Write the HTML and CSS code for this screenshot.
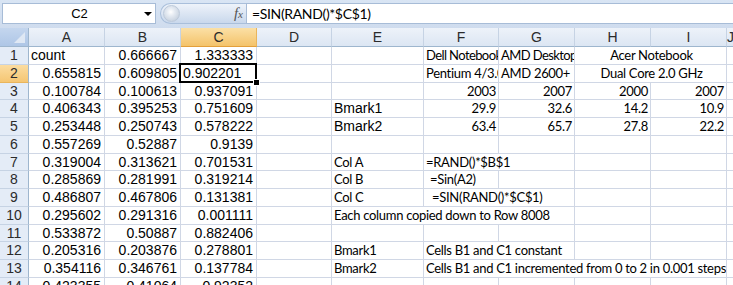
FILE: index.html
```html
<!DOCTYPE html>
<html>
<head>
    <title>Benchmark sheet</title>
    <link rel="stylesheet" href="styles.css">
</head>
<body>
    <div class="topbar">
        <div class="namebox">
            <span class="name">C2</span>
            <span class="arrow"></span>
        </div>
        <div class="fxbtn">
            <span class="knob"></span>
            <span class="fx">f<i>x</i></span>
        </div>
        <div class="formula">=SIN(RAND()*$C$1)</div>
    </div>

    <div class="sheet">
        <!-- column headers -->
        <div class="corner"><span class="tri"></span></div>
        <div class="colhead">A</div>
        <div class="colhead">B</div>
        <div class="colhead active">C</div>
        <div class="colhead">D</div>
        <div class="colhead">E</div>
        <div class="colhead">F</div>
        <div class="colhead">G</div>
        <div class="colhead">H</div>
        <div class="colhead">I</div>
        <div class="colhead">J</div>

        <!-- row 1 -->
        <div class="rowhead">1</div>
        <div class="cell">count</div>
        <div class="cell num">0.666667</div>
        <div class="cell num">1.333333</div>
        <div class="cell"></div>
        <div class="cell"></div>
        <div class="cell txt tight">Dell Notebook</div>
        <div class="cell txt tight">AMD Desktop</div>
        <div class="cell txt mid span2">Acer Notebook</div>
        <div class="cell"></div>

        <!-- row 2 -->
        <div class="rowhead active">2</div>
        <div class="cell num">0.655815</div>
        <div class="cell num">0.609805</div>
        <div class="cell sel">0.902201<span class="handle"></span></div>
        <div class="cell"></div>
        <div class="cell"></div>
        <div class="cell txt">Pentium 4/3.0 GHz</div>
        <div class="cell txt">AMD 2600+</div>
        <div class="cell txt mid span2">Dual Core 2.0 GHz</div>
        <div class="cell"></div>

        <!-- row 3 -->
        <div class="rowhead">3</div>
        <div class="cell num">0.100784</div>
        <div class="cell num">0.100613</div>
        <div class="cell num">0.937091</div>
        <div class="cell"></div>
        <div class="cell"></div>
        <div class="cell txt num">2003</div>
        <div class="cell txt num">2007</div>
        <div class="cell txt num">2000</div>
        <div class="cell txt num">2007</div>
        <div class="cell"></div>

        <!-- row 4 -->
        <div class="rowhead">4</div>
        <div class="cell num">0.406343</div>
        <div class="cell num">0.395253</div>
        <div class="cell num">0.751609</div>
        <div class="cell"></div>
        <div class="cell">Bmark1</div>
        <div class="cell txt num">29.9</div>
        <div class="cell txt num">32.6</div>
        <div class="cell txt num">14.2</div>
        <div class="cell txt num">10.9</div>
        <div class="cell"></div>

        <!-- row 5 -->
        <div class="rowhead">5</div>
        <div class="cell num">0.253448</div>
        <div class="cell num">0.250743</div>
        <div class="cell num">0.578222</div>
        <div class="cell"></div>
        <div class="cell">Bmark2</div>
        <div class="cell txt num">63.4</div>
        <div class="cell txt num">65.7</div>
        <div class="cell txt num">27.8</div>
        <div class="cell txt num">22.2</div>
        <div class="cell"></div>

        <!-- row 6 -->
        <div class="rowhead">6</div>
        <div class="cell num">0.557269</div>
        <div class="cell num">0.52887</div>
        <div class="cell num">0.9139</div>
        <div class="cell"></div>
        <div class="cell"></div>
        <div class="cell"></div>
        <div class="cell"></div>
        <div class="cell"></div>
        <div class="cell"></div>
        <div class="cell"></div>

        <!-- row 7 -->
        <div class="rowhead">7</div>
        <div class="cell num">0.319004</div>
        <div class="cell num">0.313621</div>
        <div class="cell num">0.701531</div>
        <div class="cell"></div>
        <div class="cell txt">Col A</div>
        <div class="cell txt span2">=RAND()*$B$1</div>
        <div class="cell"></div>
        <div class="cell"></div>
        <div class="cell"></div>

        <!-- row 8 -->
        <div class="rowhead">8</div>
        <div class="cell num">0.285869</div>
        <div class="cell num">0.281991</div>
        <div class="cell num">0.319214</div>
        <div class="cell"></div>
        <div class="cell txt">Col B</div>
        <div class="cell txt pad1">=Sin(A2)</div>
        <div class="cell"></div>
        <div class="cell"></div>
        <div class="cell"></div>
        <div class="cell"></div>

        <!-- row 9 -->
        <div class="rowhead">9</div>
        <div class="cell num">0.486807</div>
        <div class="cell num">0.467806</div>
        <div class="cell num">0.131381</div>
        <div class="cell"></div>
        <div class="cell txt">Col C</div>
        <div class="cell txt pad2 span2">=SIN(RAND()*$C$1)</div>
        <div class="cell"></div>
        <div class="cell"></div>
        <div class="cell"></div>

        <!-- row 10 -->
        <div class="rowhead">10</div>
        <div class="cell num">0.295602</div>
        <div class="cell num">0.291316</div>
        <div class="cell num">0.001111</div>
        <div class="cell"></div>
        <div class="cell txt span3">Each column copied down to Row 8008</div>
        <div class="cell"></div>
        <div class="cell"></div>
        <div class="cell"></div>

        <!-- row 11 -->
        <div class="rowhead">11</div>
        <div class="cell num">0.533872</div>
        <div class="cell num">0.50887</div>
        <div class="cell num">0.882406</div>
        <div class="cell"></div>
        <div class="cell"></div>
        <div class="cell"></div>
        <div class="cell"></div>
        <div class="cell"></div>
        <div class="cell"></div>
        <div class="cell"></div>

        <!-- row 12 -->
        <div class="rowhead">12</div>
        <div class="cell num">0.205316</div>
        <div class="cell num">0.203876</div>
        <div class="cell num">0.278801</div>
        <div class="cell"></div>
        <div class="cell txt">Bmark1</div>
        <div class="cell txt span2">Cells B1 and C1 constant</div>
        <div class="cell"></div>
        <div class="cell"></div>
        <div class="cell"></div>

        <!-- row 13 -->
        <div class="rowhead">13</div>
        <div class="cell num">0.354116</div>
        <div class="cell num">0.346761</div>
        <div class="cell num">0.137784</div>
        <div class="cell"></div>
        <div class="cell txt">Bmark2</div>
        <div class="cell txt span4">Cells B1 and C1 incremented from 0 to 2 in 0.001 steps</div>
        <div class="cell"></div>

        <!-- row 14 -->
        <div class="rowhead">14</div>
        <div class="cell num">0.423355</div>
        <div class="cell num">0.41064</div>
        <div class="cell num">0.92352</div>
        <div class="cell"></div>
        <div class="cell"></div>
        <div class="cell"></div>
        <div class="cell"></div>
        <div class="cell"></div>
        <div class="cell"></div>
        <div class="cell"></div>
    </div>
</body>
</html>
```

FILE: styles.css
```css
html, body {
    margin: 0;
    padding: 0;
    height: 100%;
    overflow: hidden;
}
body {
    background-color: #ffffff;
    font-family: "Liberation Sans", Arial, sans-serif;
    font-size: 14px;
    color: #000;
}

/* formula bar */
.topbar {
    display: flex;
    height: 28px;
    box-sizing: border-box;
    padding: 3px 0 4px 2px;
    background: linear-gradient(#d9e5f4, #cfdcee);
}
.namebox {
    display: flex;
    align-items: center;
    width: 154px;
    box-sizing: border-box;
    background: #fff;
    border: 1px solid #a7bcd7;
}
.name {
    flex: 1;
    text-align: center;
    font-size: 13px;
    padding-left: 12px;
}
.arrow {
    width: 0;
    height: 0;
    margin-right: 3px;
    border-left: 4px solid transparent;
    border-right: 4px solid transparent;
    border-top: 4px solid #000;
}
.fxbtn {
    display: flex;
    align-items: center;
    justify-content: space-between;
    width: 86px;
    margin-left: 4px;
    padding: 0 3px 0 2px;
    box-sizing: border-box;
    border: 1px solid #a9bfdb;
    border-right: none;
    border-radius: 11px 0 0 11px;
    background: linear-gradient(#eef3fa, #c9d8ec);
}
.knob {
    width: 15px;
    height: 15px;
    border-radius: 50%;
    background: radial-gradient(circle at 45% 40%, #ffffff 0, #e3e9f1 35%, #b9c6d6 100%);
    border: 1px solid #bcc9da;
}
.fx {
    font-family: "Liberation Serif", serif;
    font-style: italic;
    font-size: 15px;
    color: #555;
}
.fx i {
    font-size: 11px;
}
.formula {
    flex: 1;
    background: #fff;
    border: 1px solid #a7bcd7;
    border-right: none;
    padding-left: 5px;
    font-family: Lato, "Liberation Sans", sans-serif;
    font-size: 14px;
    letter-spacing: -0.35px;
    line-height: 19px;
}

/* grid */
.sheet {
    display: grid;
    grid-template-columns: 29px 76px 76px 76px 75px 92px 75px 76px 76px 76px 1fr;
    grid-template-rows: 19px;
    grid-auto-rows: 17.75px;
}
.corner {
    position: relative;
    background: linear-gradient(#c4d6ee, #aec6e6);
    border-right: 1px solid #9eb6ce;
    border-bottom: 1px solid #9eb6ce;
}
.tri {
    position: absolute;
    right: 3px;
    bottom: 3px;
    width: 0;
    height: 0;
    border-left: 11px solid transparent;
    border-bottom: 11px solid #dfe8f4;
}
.colhead {
    background: linear-gradient(#edf2f9, #dce6f3);
    border-right: 1px solid #c6d3e4;
    border-bottom: 1px solid #9eb6ce;
    text-align: center;
    line-height: 18px;
    color: #2b2b2b;
}
.colhead.active {
    background: linear-gradient(#fbe0a6, #f4c36a);
    border-right-color: #e9b55c;
    border-bottom-color: #e39f3a;
}
.rowhead {
    background: #e4ecf7;
    border-right: 1px solid #9eb6ce;
    border-bottom: 1px solid #c6d3e4;
    text-align: center;
    line-height: 17px;
    color: #2b2b2b;
    box-sizing: border-box;
}
.rowhead.active {
    background: linear-gradient(#fbdca0, #f5c673);
    border-bottom-color: #e9b55c;
}
.cell {
    box-sizing: border-box;
    border-right: 1px solid #d0d7e5;
    border-bottom: 1px solid #d0d7e5;
    padding: 0 3px 0 2px;
    line-height: 17px;
    white-space: nowrap;
    overflow: hidden;
}
.num {
    text-align: right;
}
.txt {
    font-family: Lato, "Liberation Sans", sans-serif;
    font-size: 13px;
    letter-spacing: -0.3px;
    padding-right: 0;
}
.txt.num {
    padding-right: 2px;
}
.tight {
    letter-spacing: -0.6px;
}
.mid {
    text-align: center;
}
.pad1 {
    padding-left: 6px;
}
.pad2 {
    padding-left: 8px;
}
.span2 {
    grid-column: span 2;
}
.span3 {
    grid-column: span 3;
}
.span4 {
    grid-column: span 4;
}
.sel {
    position: relative;
    overflow: visible;
}
.sel::after {
    content: "";
    position: absolute;
    left: -2px;
    top: -2px;
    right: -1px;
    bottom: -1px;
    border: 2px solid #000;
}
.handle {
    position: absolute;
    right: -4px;
    bottom: -4px;
    width: 5px;
    height: 5px;
    background: #000;
    border: 1px solid #fff;
    z-index: 2;
}
```
